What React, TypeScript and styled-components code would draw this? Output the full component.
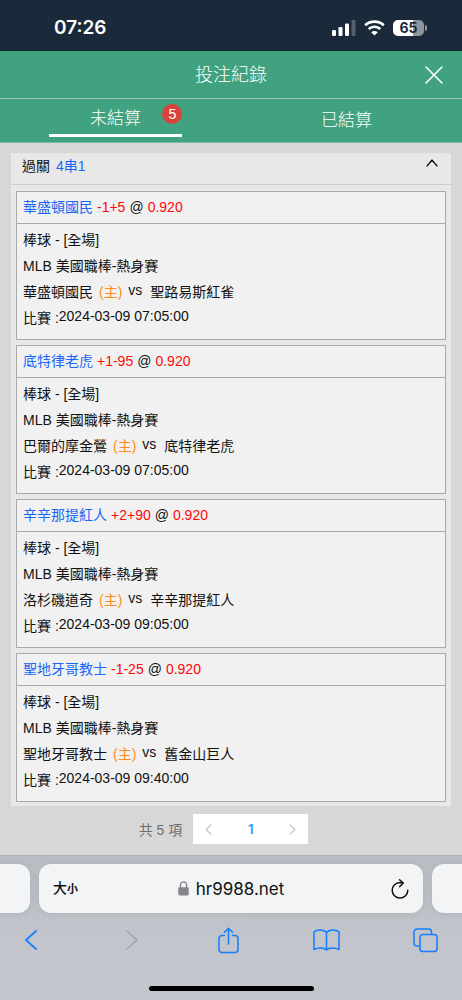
import React, { useState } from "react";
import styled, { createGlobalStyle } from "styled-components";

const textFont = '"Liberation Sans", "Noto Sans CJK TC", sans-serif';
const systemFont = 'Inter, "Noto Sans CJK TC", sans-serif';

const GlobalStyle = createGlobalStyle`
  *, *::before, *::after { box-sizing: border-box; }
  body {
    margin: 0;
    background: #d7d7d7;
    color: #111;
    font-family: ${textFont};
    font-size: 14px;
  }
  button {
    margin: 0;
    padding: 0;
    border: 0;
    background: none;
    color: inherit;
    font: inherit;
    cursor: pointer;
  }
  svg { display: block; }
`;

const Screen = styled.div`
  min-height: 100vh;
  display: flex;
  flex-direction: column;
`;

const StatusBar = styled.div`
  display: flex;
  align-items: center;
  justify-content: space-between;
  height: 51px;
  padding: 4px 38px 0 54px;
  background: #1b2a3a;
  color: #fff;
`;

const Clock = styled.time`
  font: 600 19px/24px ${systemFont};
`;

const StatusIcons = styled.div`
  display: flex;
  align-items: center;
  gap: 8px;
`;

const BatteryShell = styled.div`
  position: relative;
  width: 31px;
  height: 16px;
  border-radius: 5px;
  background: linear-gradient(90deg, #fff 65%, #8e959d 65%);
  color: #1b2a3a;
  font: 700 14px/16px ${systemFont};
  text-align: center;

  &::after {
    content: "";
    position: absolute;
    top: 5px;
    right: -3px;
    width: 2px;
    height: 6px;
    border-radius: 0 2px 2px 0;
    background: #8e959d;
  }
`;

const Header = styled.header`
  display: grid;
  grid-template-columns: 1fr auto 1fr;
  align-items: center;
  height: 48px;
  padding: 0 19px;
  border-bottom: 1px solid #a5bfb4;
  background: #41a280;
  color: #fff;
`;

const Title = styled.h1`
  grid-column: 2;
  margin: 0;
  font-size: 18px;
  font-weight: 300;
  line-height: 24px;
`;

const CloseButton = styled.button`
  justify-self: end;
`;

const Tabs = styled.div`
  display: flex;
  height: 44px;
  border-bottom: 1px solid #7dbba4;
  background: #41a280;
`;

const Tab = styled.button`
  display: flex;
  flex: 1;
  align-items: center;
  justify-content: center;
  color: #fff;
  font-size: 17px;
  font-weight: 300;
`;

const TabLabel = styled.span<{ $active: boolean }>`
  position: relative;
  width: 58%;
  border-bottom: ${(p) => (p.$active ? "3px solid #fff" : "0")};
  line-height: 30px;
`;

const Badge = styled.span`
  position: absolute;
  top: 0;
  right: 0;
  width: 20px;
  height: 20px;
  border-radius: 10px;
  background: #d8433c;
  font-size: 14px;
  font-weight: 400;
  line-height: 20px;
`;

const Main = styled.main`
  flex: 1;
  padding: 10px 11px;
`;

const Panel = styled.section`
  padding-bottom: 4px;
  background: #e8e8e8;
`;

const PanelHead = styled.button`
  display: flex;
  align-items: flex-start;
  justify-content: space-between;
  width: 100%;
  height: 32px;
  padding: 0 13px 0 11px;
  border-bottom: 1px solid #ccc;
  line-height: 26px;
  text-align: left;

  svg { margin-top: 6px; }
`;

const PanelTitle = styled.span`
  display: flex;
  gap: 6px;
`;

const Blue = styled.span`
  color: #1b66f5;
`;

const BetList = styled.div`
  display: flex;
  flex-direction: column;
  gap: 5px;
  padding: 6px 5px 0;
`;

const Card = styled.article`
  border: 1px solid #a9a9a9;
  background: #f1f1f1;
`;

const CardHead = styled.h2`
  display: flex;
  gap: 4px;
  margin: 0;
  padding: 0 6px;
  border-bottom: 1px solid #a9a9a9;
  font-size: 14px;
  font-weight: 400;
  line-height: 31px;
`;

const Red = styled.span`
  color: #ff0808;
`;

const CardBody = styled.div`
  padding: 3px 6px 8px;
`;

const Line = styled.div<{ $gap?: number }>`
  display: flex;
  gap: ${(p) => p.$gap ?? 0}px;
  line-height: 26px;
`;

const Home = styled.span`
  color: #ff8c1a;
`;

const Raised = styled.span`
  line-height: 22px;
`;

const Away = styled.span`
  padding-left: 2px;
`;

const Pagination = styled.nav`
  display: flex;
  align-items: center;
  justify-content: center;
  gap: 11px;
  padding-top: 8px;
  padding-right: 15px;
  color: #6c6e72;
`;

const Pager = styled.div`
  display: flex;
  height: 30px;
  background: #fff;
`;

const PageStep = styled.button`
  display: flex;
  align-items: center;
  justify-content: center;
  width: 31px;
  color: #c0c4cc;
`;

const PageNumber = styled.button`
  width: 53px;
  color: #409eff;
  font: 700 13px/30px ${systemFont};
`;

const Browser = styled.footer`
  border-top: 1px solid #aeb2b7;
  background: linear-gradient(#b8bdc3, #c2c6cc 60%);
`;

const AddressRow = styled.div`
  display: flex;
  gap: 9px;
  padding-top: 8px;
`;

const NeighbourTab = styled.div<{ $side: "left" | "right" }>`
  width: 30px;
  border-radius: ${(p) => (p.$side === "left" ? "0 12px 12px 0" : "12px 0 0 12px")};
  background: #f2f4f5;
  box-shadow: 0 1px 8px rgba(0, 0, 0, 0.08);
`;

const AddressBar = styled.div`
  display: grid;
  grid-template-columns: 1fr auto 1fr;
  flex: 1;
  align-items: center;
  height: 49px;
  padding: 0 14px;
  border-radius: 12px;
  background: #f2f4f5;
  box-shadow: 0 1px 8px rgba(0, 0, 0, 0.08);
`;

const TextSize = styled.button`
  justify-self: start;
  font: 500 14px/20px ${systemFont};

  small {
    font-size: 11px;
    font-weight: 700;
  }
`;

const Address = styled.span`
  display: flex;
  align-items: center;
  gap: 7px;
  font: 400 17px/24px ${systemFont};
`;

const ReloadButton = styled.button`
  justify-self: end;
`;

const Toolbar = styled.div`
  display: flex;
  align-items: center;
  justify-content: space-between;
  padding: 11px 21px 0 15px;
  color: #157efb;
`;

const ToolButton = styled.button`
  display: flex;
  align-items: center;
  justify-content: center;
  width: 32px;
  height: 32px;

  &:disabled { color: #9fa3a8; }
`;

const HomeIndicator = styled.div`
  width: 165px;
  height: 5px;
  margin: 30px auto 9px;
  border-radius: 3px;
  background: #000;
`;

const SignalIcon = () => (
  <svg width="24" height="16" viewBox="0 0 24 16" fill="#fff" aria-hidden="true">
    <rect x="0" y="10" width="4" height="6" rx="1.2" />
    <rect x="6.5" y="7" width="4" height="9" rx="1.2" />
    <rect x="13" y="3.5" width="4" height="12.5" rx="1.2" />
    <rect x="19.5" y="0" width="4" height="16" rx="1.2" opacity="0.25" />
  </svg>
);

const WifiIcon = () => (
  <svg width="21" height="16" viewBox="0 0 21 16" fill="none" stroke="#fff" strokeWidth="2.7" aria-hidden="true">
    <path d="M1.2 5.3C6.4.4 14.6.4 19.8 5.3" />
    <path d="M4.7 9C8 6 13 6 16.3 9" />
    <path d="M10.5 15.6 7.2 12.2C9.1 10.6 11.9 10.6 13.8 12.2Z" fill="#fff" stroke="none" />
  </svg>
);

const CloseIcon = () => (
  <svg width="18" height="18" viewBox="0 0 18 18" fill="none" stroke="#fff" strokeWidth="1.6" strokeLinecap="round" aria-hidden="true">
    <path d="M1 1 17 17M17 1 1 17" />
  </svg>
);

const Chevron = ({ d, w, h, stroke }: { d: string; w: number; h: number; stroke: number }) => (
  <svg width={w} height={h} viewBox={`0 0 ${w} ${h}`} fill="none" stroke="currentColor" strokeWidth={stroke} strokeLinecap="round" strokeLinejoin="round" aria-hidden="true">
    <path d={d} />
  </svg>
);

const LockIcon = () => (
  <svg width="11" height="15" viewBox="0 0 11 15" aria-hidden="true">
    <path d="M2.4 7V4.2C2.4-.2 8.6-.2 8.6 4.2V7" fill="none" stroke="#85868b" strokeWidth="1.3" />
    <rect x="0.3" y="6.2" width="10.4" height="8.3" rx="1.4" fill="#85868b" />
  </svg>
);

const ReloadIcon = () => (
  <svg width="18" height="20" viewBox="0 0 18 20" fill="none" stroke="#111" strokeWidth="1.5" strokeLinecap="round" strokeLinejoin="round" aria-hidden="true">
    <path d="M16.8 11.3A7.8 7.8 0 1 1 9 3.5L12 3.8" />
    <path d="M8.6.8 12.2 4 8.8 7.6" />
  </svg>
);

const ShareIcon = () => (
  <svg width="21" height="27" viewBox="0 0 21 27" fill="none" stroke="currentColor" strokeWidth="1.5" strokeLinecap="round" strokeLinejoin="round" aria-hidden="true">
    <path d="M6.5 8.5H4A3 3 0 0 0 1 11.5V22.5A3 3 0 0 0 4 25.5H17A3 3 0 0 0 20 22.5V11.5A3 3 0 0 0 17 8.5H14.5" />
    <path d="M10.5 17V1.3M6.5 5.2 10.5 1.2 14.5 5.2" />
  </svg>
);

const BookIcon = () => (
  <svg width="27" height="22" viewBox="0 0 27 22" fill="none" stroke="currentColor" strokeWidth="1.5" strokeLinejoin="round" aria-hidden="true">
    <path d="M13.5 3.5C11 .5 4.5.2 1 2.9V20.5C4.5 18.3 11 18.3 13.5 20.9C16 18.3 22.5 18.3 26 20.5V2.9C22.5.2 16 .5 13.5 3.5ZV20.9" />
  </svg>
);

const WindowsIcon = () => (
  <svg width="25" height="25" viewBox="0 0 25 25" fill="none" stroke="currentColor" strokeWidth="1.5" strokeLinejoin="round" aria-hidden="true">
    <rect x="7" y="6.5" width="17" height="17" rx="2.8" />
    <path d="M7 18H4A3 3 0 0 1 1 15V4A3 3 0 0 1 4 1H15.5A3 3 0 0 1 18.5 4V6.5" />
  </svg>
);

const bets = [
  { pick: "華盛頓國民", handicap: "-1+5", home: "華盛頓國民", away: "聖路易斯紅雀", time: "2024-03-09 07:05:00" },
  { pick: "底特律老虎", handicap: "+1-95", home: "巴爾的摩金鶯", away: "底特律老虎", time: "2024-03-09 07:05:00" },
  { pick: "辛辛那提紅人", handicap: "+2+90", home: "洛杉磯道奇", away: "辛辛那提紅人", time: "2024-03-09 09:05:00" },
  { pick: "聖地牙哥教士", handicap: "-1-25", home: "聖地牙哥教士", away: "舊金山巨人", time: "2024-03-09 09:40:00" },
];

export default function App() {
  const [tab, setTab] = useState(0);
  const [open, setOpen] = useState(true);

  return (
    <Screen>
      <GlobalStyle />
      <StatusBar>
        <Clock>07:26</Clock>
        <StatusIcons>
          <SignalIcon />
          <WifiIcon />
          <BatteryShell>65</BatteryShell>
        </StatusIcons>
      </StatusBar>

      <Header>
        <Title>投注紀錄</Title>
        <CloseButton type="button" aria-label="關閉"><CloseIcon /></CloseButton>
      </Header>

      <Tabs role="tablist">
        <Tab type="button" role="tab" aria-selected={tab === 0} onClick={() => setTab(0)}>
          <TabLabel $active={tab === 0}>未結算<Badge>5</Badge></TabLabel>
        </Tab>
        <Tab type="button" role="tab" aria-selected={tab === 1} onClick={() => setTab(1)}>
          <TabLabel $active={tab === 1}>已結算</TabLabel>
        </Tab>
      </Tabs>

      <Main>
        <Panel>
          <PanelHead type="button" aria-expanded={open} onClick={() => setOpen(!open)}>
            <PanelTitle><span>過關</span><Blue>4串1</Blue></PanelTitle>
            <Chevron w={12} h={8} stroke={1.2} d={open ? "M1 7 6 1 11 7" : "M1 1 6 7 11 1"} />
          </PanelHead>
          {open && (
            <BetList>
              {bets.map((bet) => (
                <Card key={bet.pick}>
                  <CardHead>
                    <Blue>{bet.pick}</Blue>
                    <Red>{bet.handicap}</Red>
                    <span>@</span>
                    <Red>0.920</Red>
                  </CardHead>
                  <CardBody>
                    <Line>棒球 - [全場]</Line>
                    <Line>MLB 美國職棒-熱身賽</Line>
                    <Line $gap={6}>
                      <span>{bet.home}</span>
                      <Home>(主)</Home>
                      <Raised>vs</Raised>
                      <Away>{bet.away}</Away>
                    </Line>
                    <Line>
                      <span>比賽 :</span>
                      <Raised>{bet.time}</Raised>
                    </Line>
                  </CardBody>
                </Card>
              ))}
            </BetList>
          )}
        </Panel>
        <Pagination aria-label="分頁">
          <span>共 5 項</span>
          <Pager>
            <PageStep type="button" aria-label="上一頁"><Chevron w={7} h={11} stroke={1.2} d="M6 1 1 5.5 6 10" /></PageStep>
            <PageNumber type="button" aria-current="page">1</PageNumber>
            <PageStep type="button" aria-label="下一頁"><Chevron w={7} h={11} stroke={1.2} d="M1 1 6 5.5 1 10" /></PageStep>
          </Pager>
        </Pagination>
      </Main>

      <Browser>
        <AddressRow>
          <NeighbourTab $side="left" />
          <AddressBar>
            <TextSize type="button">大<small>小</small></TextSize>
            <Address><LockIcon />hr9988.net</Address>
            <ReloadButton type="button" aria-label="重新載入"><ReloadIcon /></ReloadButton>
          </AddressBar>
          <NeighbourTab $side="right" />
        </AddressRow>
        <Toolbar>
          <ToolButton type="button" aria-label="返回"><Chevron w={16} h={20} stroke={1.7} d="M13 1 3 10 13 19" /></ToolButton>
          <ToolButton type="button" aria-label="前進" disabled><Chevron w={16} h={20} stroke={1.5} d="M5 1 15 10 5 19" /></ToolButton>
          <ToolButton type="button" aria-label="分享"><ShareIcon /></ToolButton>
          <ToolButton type="button" aria-label="書籤"><BookIcon /></ToolButton>
          <ToolButton type="button" aria-label="分頁總覽"><WindowsIcon /></ToolButton>
        </Toolbar>
        <HomeIndicator />
      </Browser>
    </Screen>
  );
}
